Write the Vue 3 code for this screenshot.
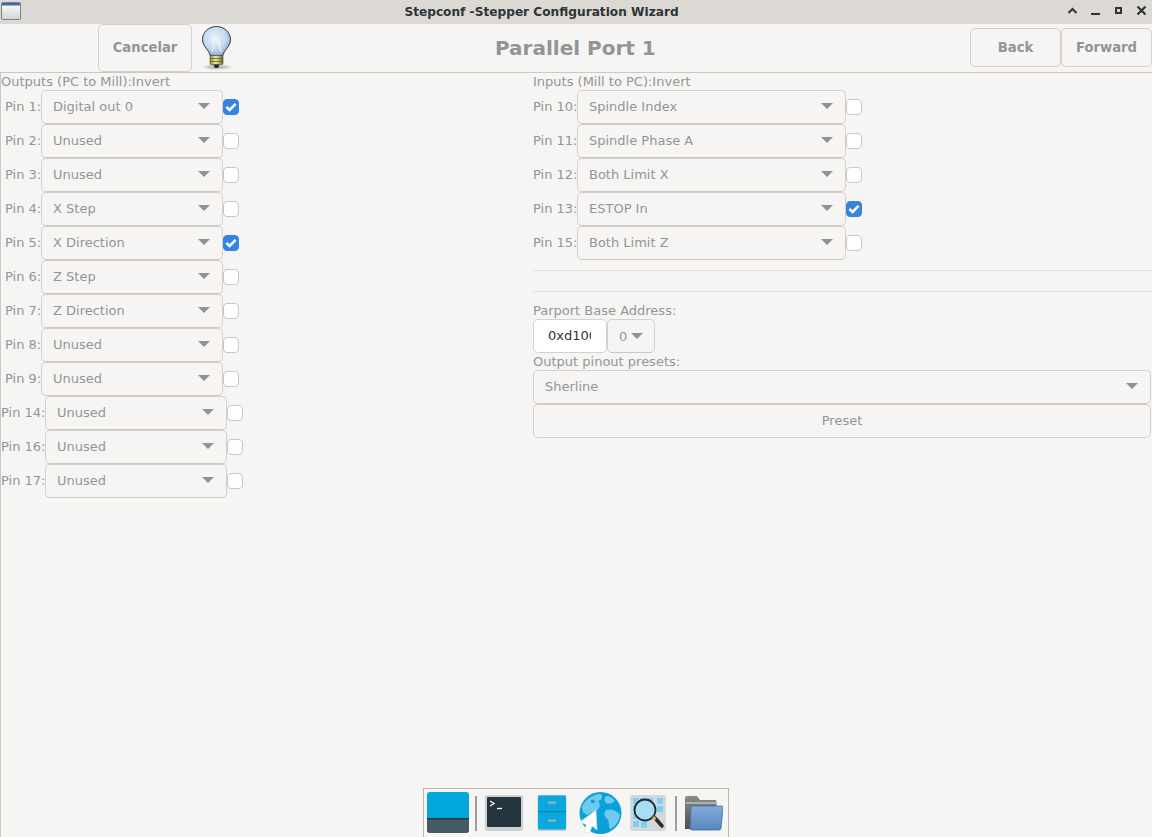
<script setup>
const outputs = [
  { pin: 1, value: 'Digital out 0', on: true },
  { pin: 2, value: 'Unused' },
  { pin: 3, value: 'Unused' },
  { pin: 4, value: 'X Step' },
  { pin: 5, value: 'X Direction', on: true },
  { pin: 6, value: 'Z Step' },
  { pin: 7, value: 'Z Direction' },
  { pin: 8, value: 'Unused' },
  { pin: 9, value: 'Unused' },
  { pin: 14, value: 'Unused' },
  { pin: 16, value: 'Unused' },
  { pin: 17, value: 'Unused' }
]
const inputs = [
  { pin: 10, value: 'Spindle Index' },
  { pin: 11, value: 'Spindle Phase A' },
  { pin: 12, value: 'Both Limit X' },
  { pin: 13, value: 'ESTOP In', on: true },
  { pin: 15, value: 'Both Limit Z' }
]
</script>

<template>
  <div class="window">
    <header class="titlebar">
      <svg class="winicon" width="22" height="20" viewBox="0 0 22 20">
        <defs>
          <linearGradient id="wg" x1="0" y1="0" x2="0" y2="1">
            <stop offset="0" stop-color="#ffffff" />
            <stop offset="1" stop-color="#cfd6d6" />
          </linearGradient>
        </defs>
        <rect x="1.5" y="1.5" width="19" height="17" rx="1.5" fill="url(#wg)" stroke="#7d8285" />
        <rect x="2" y="2" width="18" height="2.5" fill="#3f6aa8" />
      </svg>
      <span class="title">Stepconf -Stepper Configuration Wizard</span>
      <div class="wm">
        <svg width="13" height="12" viewBox="0 0 13 12"><path d="M2.5 8 L6.5 4 L10.5 8" fill="none" stroke="#2e3436" stroke-width="2" /></svg>
        <svg width="13" height="12" viewBox="0 0 13 12"><path d="M2 9 H11" fill="none" stroke="#2e3436" stroke-width="2" /></svg>
        <svg width="13" height="12" viewBox="0 0 13 12"><rect x="4" y="3" width="5" height="5" fill="none" stroke="#2e3436" stroke-width="2" /></svg>
        <svg width="13" height="12" viewBox="0 0 13 12"><path d="M2.5 1.5 L10.5 9.5 M10.5 1.5 L2.5 9.5" fill="none" stroke="#2e3436" stroke-width="2.2" /></svg>
      </div>
    </header>

    <div class="toolbar">
      <div class="tb-left">
        <button class="btn bold cancel">Cancelar</button>
        <svg class="bulb" width="36" height="46" viewBox="0 0 36 46">
          <defs>
            <radialGradient id="glass" cx="0.45" cy="0.4" r="0.65">
              <stop offset="0" stop-color="#eef4fb" />
              <stop offset="0.6" stop-color="#c6d8f0" />
              <stop offset="1" stop-color="#7f9fd0" />
            </radialGradient>
            <linearGradient id="brass" x1="0" y1="0" x2="1" y2="0">
              <stop offset="0" stop-color="#8f8a3a" />
              <stop offset="0.45" stop-color="#eeeaa0" />
              <stop offset="1" stop-color="#6f6a2a" />
            </linearGradient>
            <radialGradient id="shade" cx="0.5" cy="0.5" r="0.5">
              <stop offset="0" stop-color="#555" stop-opacity="0.55" />
              <stop offset="1" stop-color="#555" stop-opacity="0" />
            </radialGradient>
          </defs>
          <ellipse cx="16" cy="42" rx="16" ry="3.2" fill="url(#shade)" />
          <path d="M15.5 1.5 C7.5 1.5 1.5 7.5 1.5 14.5 C1.5 21.5 8 24.5 9 30.5 H22 C23 24.5 29.5 21.5 29.5 14.5 C29.5 7.5 23.5 1.5 15.5 1.5 Z" fill="url(#glass)" stroke="#2e3a4c" stroke-width="1" />
          <path d="M11 27 L13 18 L12 14 M20 27 L18 18 L19 14 M13 18 L18 18" fill="none" stroke="#f4f6f8" stroke-width="1" />
          <rect x="9" y="30.5" width="13" height="9" rx="1" fill="url(#brass)" stroke="#55521f" stroke-width="0.6" />
          <path d="M9 33.5 H22 M9 36.5 H22" stroke="#55521f" stroke-width="0.7" />
          <path d="M12.5 39.5 H18.5 L17 43 H14 Z" fill="#2b2b2b" />
        </svg>
      </div>
      <h1 class="heading">Parallel Port 1</h1>
      <div class="tb-right">
        <button class="btn bold nav">Back</button>
        <button class="btn bold nav">Forward</button>
      </div>
    </div>

    <main class="panel">
      <section class="col-left">
        <div class="cap">Outputs (PC to Mill):Invert</div>
        <div v-for="row in outputs" :key="row.pin" class="row">
          <span class="pin" :class="{ indent: row.pin < 10 }">Pin {{ row.pin }}:</span>
          <div class="combo out">
            <span>{{ row.value }}</span><i class="arrow"></i>
          </div>
          <span class="check" :class="{ on: row.on }">
            <svg v-if="row.on" width="16" height="16" viewBox="0 0 16 16"><path d="M3.4 8 L6.6 11 L12.6 4.8" fill="none" stroke="#fff" stroke-width="2.6" /></svg>
          </span>
        </div>
      </section>

      <section class="col-right">
        <div class="cap">Inputs (Mill to PC):Invert</div>
        <div v-for="row in inputs" :key="row.pin" class="row">
          <span class="pin">Pin {{ row.pin }}:</span>
          <div class="combo in">
            <span>{{ row.value }}</span><i class="arrow"></i>
          </div>
          <span class="check" :class="{ on: row.on }">
            <svg v-if="row.on" width="16" height="16" viewBox="0 0 16 16"><path d="M3.4 8 L6.6 11 L12.6 4.8" fill="none" stroke="#fff" stroke-width="2.6" /></svg>
          </span>
        </div>
        <hr class="sep first" />
        <hr class="sep second" />
        <div class="cap base">Parport Base Address:</div>
        <div class="addr">
          <div class="entry"><span>0xd100</span></div>
          <div class="combo mini"><span>0</span><i class="arrow"></i></div>
        </div>
        <div class="cap presets">Output pinout presets:</div>
        <div class="combo wide"><span>Sherline</span><i class="arrow"></i></div>
        <button class="btn preset">Preset</button>
      </section>
    </main>

    <nav class="dock">
      <svg class="d-show" width="42" height="42" viewBox="0 0 42 42">
        <rect x="0" y="0" width="42" height="41" rx="3" fill="#00a6dc" />
        <path d="M0 27 H42 V38 a3 3 0 0 1 -3 3 H3 a3 3 0 0 1 -3 -3 Z" fill="#465a66" />
        <rect x="0" y="26" width="42" height="1.4" fill="#1d3a4a" />
      </svg>
      <span class="dock-sep s1"></span>
      <svg class="d-term" width="38" height="38" viewBox="0 0 38 38">
        <rect x="0" y="1" width="38" height="36" rx="2" fill="#ccd2d4" />
        <rect x="2" y="3" width="34" height="30" rx="1" fill="#253540" />
        <path d="M5 7 L9 9.5 L5 12" fill="none" stroke="#fff" stroke-width="1.3" />
        <path d="M12 14.5 H17" stroke="#fff" stroke-width="1.3" />
      </svg>
      <svg class="d-file" width="30" height="38" viewBox="0 0 30 38">
        <rect x="0.5" y="1" width="29" height="36" rx="2" fill="#c6ced2" />
        <rect x="1" y="1.5" width="28" height="34" rx="1.5" fill="#0aa8dc" />
        <rect x="1" y="17" width="28" height="1.2" fill="#0a7fa8" />
        <rect x="11" y="7.5" width="8" height="2.2" rx="1" fill="#9fb0b8" />
        <rect x="11" y="25.5" width="8" height="2.2" rx="1" fill="#9fb0b8" />
      </svg>
      <svg class="d-web" width="43" height="44" viewBox="0 0 43 44">
        <circle cx="21.5" cy="22" r="21" fill="#0aa0da" />
        <path d="M7 10 C12 5 17 3 22 3 C24 6 23 9 19 10 C21 13 22 16 19 18 C16 22 11 20 9 24 C5 23 3 20 3 17 C3 14 5 12 7 10 Z" fill="#6fcbee" />
        <path d="M12 9 C15 8 17 10 15 12 C13 13 11 11 12 9 Z" fill="#0aa0da" />
        <path d="M27 5 C31 5 34 7 36 10 C33 12 30 14 27 12 C25 10 25 7 27 5 Z" fill="#6fcbee" />
        <path d="M26 20 C31 17 37 19 41 24 C40 31 35 37 31 38 C29 33 31 29 27 27 C25 25 25 22 26 20 Z" fill="#6fcbee" />
        <path d="M17 19 L1 31 L7 33.5 L6 42 L11 41 L13 35 L18 39 Z" fill="#ffffff" stroke="#d5dade" stroke-width="0.6" />
      </svg>
      <svg class="d-find" width="36" height="38" viewBox="0 0 36 38">
        <rect x="0" y="1" width="36" height="36" rx="2" fill="#d2d8dc" />
        <g fill="#7fd0f0">
          <rect x="3" y="4" width="6" height="6" /><rect x="10" y="4" width="6" height="6" /><rect x="17" y="4" width="6" height="6" /><rect x="27" y="4" width="6" height="6" />
          <rect x="3" y="11" width="6" height="6" /><rect x="27" y="12" width="6" height="6" />
          <rect x="3" y="19" width="6" height="6" /><rect x="3" y="27" width="6" height="6" /><rect x="11" y="28" width="6" height="6" />
        </g>
        <circle cx="15" cy="16" r="10.5" fill="#a8def5" stroke="#1e2a30" stroke-width="1.8" />
        <path d="M25 24 L32 32" stroke="#2a2a2a" stroke-width="3.6" stroke-linecap="round" />
        <path d="M23 23 L25.5 25.5" stroke="#d8b040" stroke-width="3" />
      </svg>
      <span class="dock-sep s2"></span>
      <svg class="d-dir" width="38" height="36" viewBox="0 0 38 36">
        <defs>
          <linearGradient id="fback" x1="0" y1="0" x2="0" y2="1">
            <stop offset="0" stop-color="#8a8a86" />
            <stop offset="1" stop-color="#4e4e4c" />
          </linearGradient>
          <linearGradient id="ffront" x1="0" y1="0" x2="0" y2="1">
            <stop offset="0" stop-color="#84abdc" />
            <stop offset="1" stop-color="#5a86be" />
          </linearGradient>
        </defs>
        <path d="M0 3 a2 2 0 0 1 2 -2 H12 L15 5 H30 a1.5 1.5 0 0 1 1.5 1.5 V34 H0 Z" fill="url(#fback)" />
        <rect x="1" y="7" width="30" height="2" fill="#b0b0ab" />
        <path d="M6 12 a1 1 0 0 1 1 -1 H37 a1 1 0 0 1 1 1 L36 33 a2 2 0 0 1 -2 2 H7 a2 2 0 0 1 -2 -2 Z" fill="url(#ffront)" stroke="#3d6aa3" stroke-width="0.8" />
      </svg>
    </nav>
  </div>
</template>

<style>
html, body { margin: 0; padding: 0; background: #f6f5f4; }
</style>

<style scoped>
.window {
  position: relative;
  width: 1152px;
  height: 837px;
  overflow: hidden;
  display: flex;
  flex-direction: column;
  background: #f6f5f4;
  font-family: "DejaVu Sans", sans-serif;
  font-size: 13px;
  color: #929595;
}
.titlebar {
  position: relative;
  flex: 0 0 24px;
  box-sizing: border-box;
  padding-right: 69px;
  background: #dcd8d4;
  display: flex;
  align-items: center;
  justify-content: center;
}
.winicon { position: absolute; left: 0; top: 1px; }
.title { font-size: 12.17px; font-weight: 700; color: #2e3436; }
.wm {
  position: absolute;
  right: 4px;
  top: 5px;
  display: flex;
  gap: 10px;
}
.toolbar {
  flex: 0 0 48px;
  box-sizing: border-box;
  position: relative;
  display: flex;
  justify-content: space-between;
  align-items: flex-start;
  border-bottom: 1px solid #cdc7c2;
}
.tb-left { display: flex; padding-left: 98px; align-items: flex-start; }
.bulb { margin: 1px 0 0 9px; }
.tb-right { display: flex; margin-top: 4px; }
.heading {
  position: absolute;
  left: 495px;
  top: 12px;
  margin: 0;
  font-size: 20px;
  line-height: 24px;
  font-weight: 700;
  color: #929595;
}
.btn {
  box-sizing: border-box;
  margin: 0;
  background: #f6f5f4;
  border: 1px solid #d5d0cc;
  border-radius: 5px;
  font-family: inherit;
  font-size: 13px;
  color: #929595;
  padding: 0;
}
.bold { font-weight: 700; font-size: 13.2px; }
.cancel { width: 94px; height: 48px; padding-bottom: 2px; }
.nav { width: 91px; height: 39px; }
.panel {
  flex: 1;
  display: grid;
  grid-template-columns: 532px 1fr;
  align-content: start;
  box-sizing: border-box;
  border-left: 1px solid #cdc7c2;
}
.col-left, .col-right { display: flex; flex-direction: column; min-width: 0; }
.cap { height: 17px; line-height: 17px; }
.row { display: flex; height: 34px; align-items: center; }
.pin { white-space: nowrap; width: 44px; flex: none; margin-bottom: 2px; }
.pin.indent { width: 40px; box-sizing: border-box; padding-left: 4px; }
.combo {
  box-sizing: border-box;
  height: 34px;
  display: flex;
  align-items: center;
  justify-content: space-between;
  padding: 0 12px 2px 11px;
  border: 1px solid #d5d0cc;
  border-bottom-color: #cdc7c2;
  border-radius: 5px;
  background: #f6f5f4;
  flex: none;
}
.combo.out { width: 182px; }
.combo.in { width: 269px; }
.combo.wide { width: 618px; }
.combo.mini { width: 48px; padding: 0 11px; }
.arrow {
  display: block;
  width: 0;
  height: 0;
  border-left: 6.5px solid transparent;
  border-right: 6.5px solid transparent;
  border-top: 6.5px solid #8f9292;
}
.check {
  box-sizing: border-box;
  flex: none;
  width: 16px;
  height: 16px;
  border: 1px solid #cdc7c2;
  border-radius: 4px;
  background: #ffffff;
  position: relative;
}
.check.on { background: #3584e4; border-color: #3584e4; }
.check svg { position: absolute; left: -1px; top: -1px; }
.sep { margin: 0; border: 0; border-top: 1px solid #e0dcd9; height: 0; }
.sep.first { margin-top: 10px; }
.sep.second { margin-top: 20px; }
.cap.base { margin-top: 10px; height: 17px; }
.addr { display: flex; height: 34px; }
.entry {
  box-sizing: border-box;
  width: 74px;
  height: 34px;
  border: 1px solid #d5d0cc;
  border-radius: 5px;
  background: #ffffff;
  color: #2e3436;
  padding: 0 15px 0 14px;
  line-height: 32px;
  overflow: hidden;
}
.entry span { display: block; overflow: hidden; white-space: nowrap; }
.cap.presets { height: 17px; }
.preset { width: 618px; height: 34px; padding-bottom: 2px; }
.dock {
  position: absolute;
  left: 423px;
  top: 788px;
  box-sizing: border-box;
  width: 306px;
  height: 49px;
  background: #f6f5f4;
  border: 1px solid #b8b5ad;
  border-bottom: 0;
  display: flex;
  align-items: center;
  padding-left: 3px;
}
.dock svg { flex: none; display: block; }
.dock-sep { width: 2px; height: 35px; background: #9a9e9f; flex: none; }
.s1 { margin-left: 6px; }
.d-term { margin-left: 8px; }
.d-file { margin-left: 14px; }
.d-web { margin-left: 12px; }
.d-find { margin-left: 8px; }
.s2 { margin-left: 9px; }
.d-dir { margin-left: 8px; }
</style>
